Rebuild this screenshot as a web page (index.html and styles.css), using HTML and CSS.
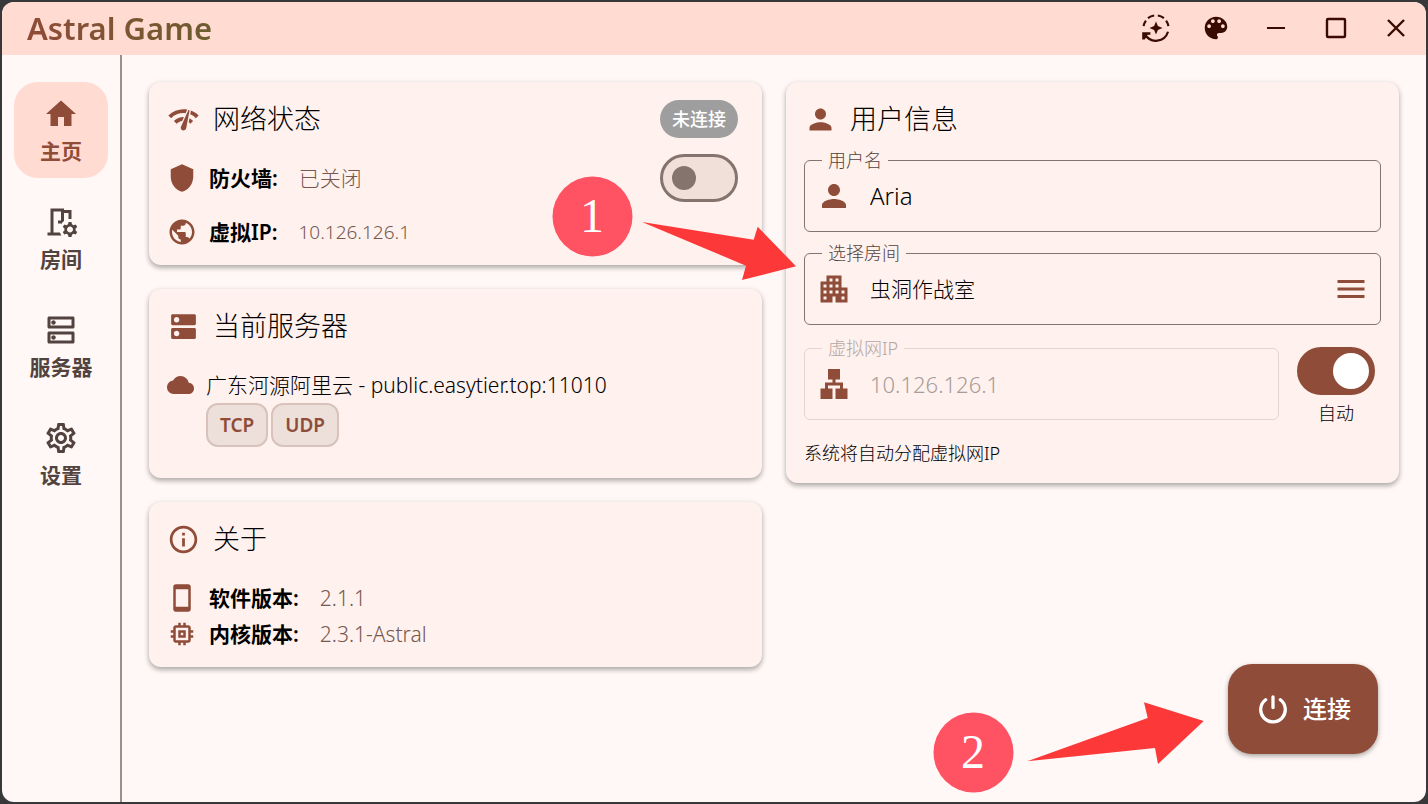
FILE: index.html
```html
<!DOCTYPE html>
<html lang="zh-CN">
<head>
<meta charset="utf-8">
<title>Astral Game</title>
<link rel="stylesheet" href="styles.css">
</head>
<body>
<div class="window">
  <header class="titlebar">
    <h1 class="app-title">Astral Game</h1>
    <div class="window-actions">
      <button class="window-btn" aria-label="检查更新"><svg class="icon-window" viewBox="0 0 30 30"><g fill="none" stroke="currentColor" stroke-width="2.2"><path d="M2.6 13.2A12.6 12.6 0 0 1 4.9 7.6M7 5.2A12.6 12.6 0 0 1 13.2 2.5M16.8 2.5A12.6 12.6 0 0 1 22.9 5.1M25.1 7.6A12.6 12.6 0 0 1 27.4 13.2"/><path d="M27 18.8A12.6 12.6 0 0 1 4 21.4"/></g><path d="M1.200 19.200H9.400V21.800H6.600L3.800 26.400H1.200zM15 8.500l1.900 4.600L21.500 15l-4.600 1.900L15 21.500l-1.900-4.600L8.500 15l4.600-1.900z"/></svg></button>
      <button class="window-btn" aria-label="主题"><svg class="icon-window" viewBox="0 0 24 24"><path d="M12 3c-4.97 0-9 4.03-9 9s4.03 9 9 9c.83 0 1.5-.67 1.5-1.5 0-.39-.15-.74-.39-1.01-.23-.26-.38-.61-.38-.99 0-.83.67-1.5 1.5-1.5H16c2.76 0 5-2.24 5-5 0-4.42-4.03-8-9-8zm-5.500 9c-.83 0-1.500-.67-1.500-1.500S5.670 9 6.500 9 8 9.670 8 10.500 7.330 12 6.500 12zm3-4C8.670 8 8 7.330 8 6.500S8.670 5 9.500 5s1.500.67 1.500 1.500S10.330 8 9.500 8zm5 0c-.83 0-1.500-.67-1.500-1.500S13.670 5 14.500 5s1.500.67 1.500 1.500S15.330 8 14.500 8zm3 4c-.83 0-1.500-.67-1.500-1.500S16.670 9 17.500 9s1.500.67 1.500 1.500-.67 1.500-1.500 1.500z"/></svg></button>
      <button class="window-btn" aria-label="最小化"><svg class="icon-window" viewBox="0 0 30 30"><path d="M6 14h18v2H6z"/></svg></button>
      <button class="window-btn" aria-label="最大化"><svg class="icon-window" viewBox="0 0 30 30"><rect x="6" y="6" width="18" height="18" rx="1" fill="none" stroke="currentColor" stroke-width="2.400"/></svg></button>
      <button class="window-btn" aria-label="关闭"><svg class="icon-window" viewBox="0 0 30 30"><path d="M7 7l16 16M23 7L7 23" fill="none" stroke="currentColor" stroke-width="2.400"/></svg></button>
    </div>
  </header>

  <div class="body">
    <nav class="sidebar">
      <a class="nav-item nav-item-active" href="#home"><svg class="icon-large" viewBox="0 0 24 24"><path d="M10 20v-6h4v6h5v-8h3L12 3 2 12h3v8z"/></svg><span>主页</span></a>
      <a class="nav-item" href="#rooms"><svg class="icon-large" viewBox="0 0 24 24"><path d="M14 11.260V6h3v4h2V4h-5V3H5v16H3v2h9.260c-.42-.6-.75-1.280-.97-2H7V5h5v8.690c.47-.98 1.160-1.820 2-2.430zM10 11h2v2h-2z"/><path fill-rule="evenodd" d="M21.690 16.370l1.140-1-1-1.730-1.450.49c-.32-.27-.68-.48-1.080-.63L19 12h-2l-.3 1.490c-.4.15-.76.36-1.080.63l-1.450-.49-1 1.730 1.140 1c-.08.5-.08.76 0 1.260l-1.140 1 1 1.730 1.450-.49c.32.27.68.48 1.080.63L17 22h2l.3-1.490c.4-.15.76-.36 1.080-.63l1.450.49 1-1.730-1.140-1c.08-.5.08-.76 0-1.270zM18 19c-1.100 0-2-.9-2-2s.9-2 2-2 2 .9 2 2-.9 2-2 2z"/></svg><span>房间</span></a>
      <a class="nav-item" href="#servers"><svg class="icon-large" viewBox="0 0 24 24"><path d="M19 15v4H5v-4h14m1-2H4c-.55 0-1 .45-1 1v6c0 .55.45 1 1 1h16c.55 0 1-.45 1-1v-6c0-.55-.45-1-1-1zM7 18.500c-.82 0-1.500-.67-1.500-1.500s.68-1.500 1.500-1.500 1.500.67 1.500 1.500-.67 1.500-1.500 1.500zM19 5v4H5V5h14m1-2H4c-.55 0-1 .45-1 1v6c0 .55.45 1 1 1h16c.55 0 1-.45 1-1V4c0-.55-.45-1-1-1zM7 8.500c-.82 0-1.500-.67-1.500-1.500S6.180 5.500 7 5.500s1.500.68 1.500 1.500S7.830 8.500 7 8.500z"/></svg><span>服务器</span></a>
      <a class="nav-item" href="#settings"><svg class="icon-large" viewBox="0 0 24 24"><path d="M19.430 12.980c.04-.32.07-.64.07-.98 0-.34-.03-.66-.07-.98l2.110-1.650c.19-.15.24-.42.12-.64l-2-3.460c-.09-.16-.26-.25-.44-.25-.06 0-.12.01-.17.03l-2.490 1c-.52-.4-1.080-.73-1.690-.98l-.38-2.650C14.460 2.180 14.250 2 14 2h-4c-.25 0-.46.18-.49.42l-.38 2.650c-.61.25-1.170.59-1.690.98l-2.490-1c-.06-.02-.12-.03-.18-.03-.17 0-.34.09-.43.25l-2 3.460c-.13.22-.07.49.12.64l2.110 1.650c-.04.32-.07.65-.07.98 0 .33.03.66.07.98l-2.110 1.650c-.19.15-.24.42-.12.64l2 3.460c.09.16.26.25.44.25.06 0 .12-.01.17-.03l2.490-1c.52.4 1.080.73 1.690.98l.38 2.650c.03.24.24.42.49.42h4c.25 0 .46-.18.49-.42l.38-2.650c.61-.25 1.170-.59 1.690-.98l2.490 1c.06.02.12.03.18.03.17 0 .34-.09.43-.25l2-3.460c.12-.22.07-.49-.12-.64l-2.110-1.650zm-1.980-1.710c.04.31.05.52.05.73 0 .21-.02.43-.05.73l-.14 1.130.89.7 1.080.84-.7 1.210-1.270-.51-1.040-.42-.9.68c-.43.32-.84.56-1.250.73l-1.060.43-.16 1.130-.2 1.350h-1.400l-.19-1.350-.16-1.130-1.060-.43c-.43-.18-.83-.41-1.230-.71l-.91-.7-1.060.43-1.270.51-.7-1.210 1.080-.84.89-.7-.14-1.130c-.03-.31-.05-.54-.05-.74s.02-.43.05-.73l.14-1.130-.89-.7-1.080-.84.7-1.210 1.270.51 1.040.42.9-.68c.43-.32.84-.56 1.250-.73l1.060-.43.16-1.130.2-1.350h1.390l.19 1.350.16 1.130 1.060.43c.43.18.83.41 1.230.71l.91.7 1.060-.43 1.270-.51.7 1.210-1.070.85-.89.7.14 1.130zM12 8c-2.210 0-4 1.790-4 4s1.790 4 4 4 4-1.790 4-4-1.790-4-4-4zm0 6c-1.100 0-2-.9-2-2s.9-2 2-2 2 .9 2 2-.9 2-2 2z"/></svg><span>设置</span></a>
    </nav>

    <main class="content">
      <div class="column">
        <section class="card">
          <div class="card-header">
            <svg class="icon-title" viewBox="0 0 24 24"><path d="M15.900 5c-.17 0-.32.09-.41.23l-.07.15-5.180 11.650c-.16.29-.26.61-.26.96 0 1.110.9 2.010 2.010 2.010.96 0 1.770-.68 1.960-1.590l.01-.03L16.400 5.500c0-.28-.22-.5-.5-.5zM1 9l2 2c2.880-2.880 6.790-4.080 10.530-3.620l1.190-2.680C9.890 3.840 4.740 5.270 1 9zm20 2l2-2c-1.640-1.640-3.550-2.820-5.590-3.570l-.53 2.820c1.500.62 2.900 1.530 4.120 2.750zm-4 4l2-2c-.8-.8-1.700-1.420-2.660-1.890l-.55 2.920c.42.27.83.59 1.210.97zM5 13l2 2c1.130-1.130 2.560-1.790 4.030-2l1.280-2.880c-2.630-.08-5.300.87-7.310 2.880z"/></svg>
            <h2 class="card-title">网络状态</h2>
            <span class="badge">未连接</span>
          </div>
          <div class="row row-switch">
            <svg class="icon-row" viewBox="0 0 24 24"><path d="M12 1L3 5v6c0 5.550 3.840 10.740 9 12 5.160-1.260 9-6.450 9-12V5l-9-4z"/></svg>
            <label class="row-label" for="firewall">防火墙:</label>
            <span class="row-value">已关闭</span>
            <input class="switch push-right" type="checkbox" id="firewall">
          </div>
          <div class="row row-ip">
            <svg class="icon-row" viewBox="0 0 24 24"><path d="M12 2C6.480 2 2 6.480 2 12s4.480 10 10 10 10-4.480 10-10S17.520 2 12 2zm-1 17.930c-3.950-.49-7-3.850-7-7.930 0-.62.08-1.210.21-1.790L9 15v1c0 1.100.9 2 2 2v1.930zm6.900-2.540c-.26-.81-1-1.390-1.900-1.390h-1v-3c0-.55-.45-1-1-1H8v-2h2c.55 0 1-.45 1-1V7h2c1.100 0 2-.9 2-2v-.41c2.930 1.190 5 4.060 5 7.410 0 2.080-.8 3.970-2.100 5.390z"/></svg>
            <span class="row-label">虚拟IP:</span>
            <span class="row-value row-value-ip">10.126.126.1</span>
          </div>
        </section>

        <section class="card card-server">
          <div class="card-header">
            <svg class="icon-title" viewBox="0 0 24 24"><path d="M20 13H4c-.55 0-1 .45-1 1v6c0 .55.45 1 1 1h16c.55 0 1-.45 1-1v-6c0-.55-.45-1-1-1zM7 19c-1.100 0-2-.9-2-2s.9-2 2-2 2 .9 2 2-.9 2-2 2zM20 3H4c-.55 0-1 .45-1 1v6c0 .55.45 1 1 1h16c.55 0 1-.45 1-1V4c0-.55-.45-1-1-1zM7 9c-1.100 0-2-.9-2-2s.9-2 2-2 2 .9 2 2-.9 2-2 2z"/></svg>
            <h2 class="card-title">当前服务器</h2>
          </div>
          <div class="server">
            <svg class="icon-cloud" viewBox="0 0 24 24"><path d="M19.350 10.040C18.670 6.590 15.640 4 12 4 9.110 4 6.600 5.640 5.350 8.040 2.340 8.360 0 10.910 0 14c0 3.310 2.690 6 6 6h13c2.760 0 5-2.240 5-5 0-2.640-2.050-4.780-4.650-4.960z"/></svg>
            <div>
              <div class="server-name">广东河源阿里云 - public.easytier.top:11010</div>
              <div class="chips"><span class="chip">TCP</span><span class="chip">UDP</span></div>
            </div>
          </div>
        </section>

        <section class="card">
          <div class="card-header">
            <svg class="icon-title" viewBox="0 0 24 24"><path d="M11 7h2v2h-2zm0 4h2v6h-2zm1-9C6.480 2 2 6.480 2 12s4.480 10 10 10 10-4.480 10-10S17.520 2 12 2zm0 18c-4.410 0-8-3.590-8-8s3.590-8 8-8 8 3.590 8 8-3.590 8-8 8z"/></svg>
            <h2 class="card-title">关于</h2>
          </div>
          <div class="versions">
            <div class="row">
              <svg class="icon-row" viewBox="0 0 24 24"><path d="M17 1.010L7 1c-1.100 0-1.990.9-1.990 2v18c0 1.100.89 2 1.990 2h10c1.100 0 2-.9 2-2V3c0-1.100-.9-1.990-2-1.990zM17 19H7V5h10v14z"/></svg>
              <span class="row-label">软件版本:</span>
              <span class="row-value">2.1.1</span>
            </div>
            <div class="row">
              <svg class="icon-row" viewBox="0 0 24 24"><path d="M15 9H9v6h6V9zm-2 4h-2v-2h2v2zm8-2V9h-2V7c0-1.100-.9-2-2-2h-2V3h-2v2h-2V3H9v2H7c-1.100 0-2 .9-2 2v2H3v2h2v2H3v2h2v2c0 1.100.9 2 2 2h2v2h2v-2h2v2h2v-2h2c1.100 0 2-.9 2-2v-2h2v-2h-2v-2h2zm-4 6H7V7h10v10z"/></svg>
              <span class="row-label">内核版本:</span>
              <span class="row-value">2.3.1-Astral</span>
            </div>
          </div>
        </section>
      </div>

      <div class="column">
        <section class="card card-user">
          <div class="card-header">
            <svg class="icon-title" viewBox="0 0 24 24"><path d="M12 12c2.210 0 4-1.790 4-4s-1.790-4-4-4-4 1.790-4 4 1.790 4 4 4zm0 2c-2.670 0-8 1.340-8 4v2h16v-2c0-2.660-5.330-4-8-4z"/></svg>
            <h2 class="card-title">用户信息</h2>
          </div>
          <div class="fields">
            <fieldset class="field">
              <legend class="field-legend"><label for="username">用户名</label></legend>
              <div class="field-body">
                <svg class="icon-large" viewBox="0 0 24 24"><path d="M12 12c2.210 0 4-1.790 4-4s-1.790-4-4-4-4 1.790-4 4 1.790 4 4 4zm0 2c-2.670 0-8 1.340-8 4v2h16v-2c0-2.660-5.330-4-8-4z"/></svg>
                <input class="field-input" id="username" type="text" value="Aria">
              </div>
            </fieldset>
            <fieldset class="field">
              <legend class="field-legend"><label for="room">选择房间</label></legend>
              <div class="field-body">
                <svg class="icon-large" viewBox="0 0 24 24"><path d="M17 11V3H7v4H3v14h8v-4h2v4h8V11h-4zM7 19H5v-2h2v2zm0-4H5v-2h2v2zm0-4H5V9h2v2zm4 4H9v-2h2v2zm0-4H9V9h2v2zm0-4H9V5h2v2zm4 8h-2v-2h2v2zm0-4h-2V9h2v2zm0-4h-2V5h2v2zm4 12h-2v-2h2v2zm0-4h-2v-2h2v2z"/></svg>
                <input class="field-input field-input-room" id="room" type="text" value="虫洞作战室" readonly>
                <button class="menu-btn" aria-label="打开房间列表"><svg class="icon-large" viewBox="0 0 24 24"><path d="M3 18h18v-2H3v2zm0-5h18v-2H3v2zm0-7v2h18V6H3z"/></svg></button>
              </div>
            </fieldset>
            <div class="ip-row">
              <fieldset class="field field-disabled">
                <legend class="field-legend"><label for="virtual-ip">虚拟网IP</label></legend>
                <div class="field-body">
                  <svg class="icon-large" viewBox="0 0 24 24"><path d="M13 22h8v-7h-3v-4h-5V9h3V2H8v7h3v2H6v4H3v7h8v-7H8v-2h8v2h-3z"/></svg>
                  <input class="field-input field-input-ip" id="virtual-ip" type="text" value="10.126.126.1" disabled>
                </div>
              </fieldset>
              <div class="auto">
                <input class="switch" type="checkbox" id="auto-ip" checked>
                <label for="auto-ip">自动</label>
              </div>
            </div>
          </div>
          <p class="hint">系统将自动分配虚拟网IP</p>
        </section>
      </div>

      <button class="connect"><svg class="icon-large" viewBox="0 0 24 24"><g fill="none" stroke="currentColor" stroke-width="2.200" stroke-linecap="round"><path d="M12 4v7"/><path d="M7.100 5.800a8.200 8.200 0 1 0 9.800 0"/></g></svg><span>连接</span></button>
    </main>
  </div>
</div>

<svg class="annotations">
  <circle class="mark" cx="592.500" cy="216.500" r="40"/>
  <text class="mark-text" x="592" y="232">1</text>
  <path class="arrow" d="M642 222L753.700 239.700 757.700 226.700 796 266.300 742 280 746 265.700z"/>
  <circle class="mark" cx="973.500" cy="752.500" r="40"/>
  <text class="mark-text" x="973" y="768">2</text>
  <path class="arrow" d="M1027.300 761.300L1147.700 718 1144 702.300 1203.700 721 1158 764 1155 748z"/>
</svg>
</body>
</html>
```

FILE: styles.css
```css
:root {
  --primary: #8f4c38;
  --surface: #fff8f6;
  --card: #fff1ed;
  --tint: #ffdbd1;
  --outline: #85736e;
  --muted: #53433f;
}

* {
  box-sizing: border-box;
}

body {
  margin: 0;
  padding: 2px;
  height: 100vh;
  background: #38383a;
  color: #000;
  font-family: "Noto Sans", "Noto Sans CJK SC", sans-serif;
  font-size: 21px;
  font-weight: 300;
  line-height: 30px;
}

button,
input {
  padding: 0;
  border: 0;
  background: none;
  color: inherit;
  font: inherit;
}

h1,
h2,
p {
  margin: 0;
}

svg {
  display: block;
  flex: none;
  fill: currentColor;
}

.window {
  display: flex;
  flex-direction: column;
  height: 100%;
  overflow: hidden;
  border-radius: 12px;
  background: var(--surface);
}

.titlebar {
  display: flex;
  align-items: flex-start;
  justify-content: space-between;
  height: 53px;
  padding-left: 25px;
  background: var(--tint);
}

.app-title {
  background: linear-gradient(90deg, #8f4c38, #6c5d2f);
  background-clip: text;
  color: transparent;
  font-size: 31px;
  font-weight: 600;
  line-height: 52px;
}

.window-actions {
  display: flex;
  color: #3a0b01;
}

.window-btn {
  display: grid;
  place-items: center;
  width: 60px;
  height: 52px;
}

.icon-window,
.icon-row {
  width: 30px;
  height: 30px;
}

.icon-title {
  width: 33px;
  height: 33px;
}

.icon-large {
  width: 36px;
  height: 36px;
}

.icon-cloud {
  width: 27px;
  height: 30px;
}

.body {
  display: flex;
  flex: 1;
  min-height: 0;
}

.sidebar {
  display: flex;
  flex-direction: column;
  gap: 12px;
  width: 120px;
  padding: 27px 12px;
  border-right: 2px solid #9d8f8a;
}

.nav-item {
  display: flex;
  flex-direction: column;
  align-items: center;
  justify-content: center;
  gap: 4px;
  height: 96px;
  padding-top: 2px;
  border-radius: 24px;
  color: var(--muted);
  font-weight: 700;
  text-decoration: none;
}

.nav-item-active {
  background: var(--tint);
  color: var(--primary);
}

.content {
  position: relative;
  display: grid;
  flex: 1;
  grid-template-columns: 1fr 1fr;
  align-items: start;
  gap: 24px;
  padding: 27px;
}

.column {
  display: flex;
  flex-direction: column;
  gap: 24px;
  min-width: 0;
}

.card {
  padding: 18px;
  border-radius: 12px;
  background: var(--card);
  box-shadow: 0 3px 5px rgb(0 0 0 / 26%), 0 1px 6px rgb(0 0 0 / 10%);
}

.card svg {
  color: var(--primary);
}

.card-header {
  display: flex;
  align-items: center;
  gap: 13px;
  height: 38px;
  padding-right: 6px;
}

.card-title {
  font-size: 27px;
  font-weight: 300;
  line-height: 38px;
}

.badge {
  margin-left: auto;
  padding: 4px 12px;
  border-radius: 19px;
  background: #9e9e9e;
  color: #fff;
  font-size: 18px;
  font-weight: 500;
}

.row {
  display: flex;
  align-items: center;
  gap: 12px;
}

.row-label {
  font-weight: 600;
}

.row-value {
  padding-left: 9px;
  color: #77574e;
}

.row-value-ip {
  font-size: 19px;
}

.row-switch {
  padding: 16px 6px 15px 0;
}

.switch {
  position: relative;
  flex: none;
  width: 78px;
  height: 48px;
  margin: 0;
  border: 3px solid var(--outline);
  border-radius: 24px;
  appearance: none;
  background: #f1dfd9;
}

.switch.push-right {
  margin-left: auto;
}

.switch::before {
  content: "";
  position: absolute;
  top: 9px;
  left: 9px;
  width: 24px;
  height: 24px;
  border-radius: 50%;
  background: var(--outline);
}

.switch:checked {
  border-color: var(--primary);
  background: var(--primary);
}

.switch:checked::before {
  top: 3px;
  left: 33px;
  width: 36px;
  height: 36px;
  background: #fff;
}

.card-server {
  padding-bottom: 31px;
}

.server {
  display: flex;
  gap: 12px;
  padding-top: 25px;
}

.chips {
  display: flex;
  gap: 3px;
  padding-top: 3px;
}

.chip {
  padding: 5px 12px;
  border: 2px solid #d8c2bc;
  border-radius: 12px;
  background: #eddfda;
  color: var(--primary);
  font-size: 19px;
  font-weight: 600;
}

.versions {
  display: flex;
  flex-direction: column;
  gap: 6px;
  padding-top: 25px;
}

.fields {
  display: flex;
  flex-direction: column;
  gap: 12px;
  padding-top: 13px;
}

.field {
  flex: 1;
  min-width: 0;
  margin: 0;
  padding: 0 11px 8px;
  border: 1px solid var(--outline);
  border-radius: 6px;
}

.field-legend {
  margin-left: 6px;
  padding: 0 6px;
  color: var(--muted);
  font-size: 18px;
  line-height: 18px;
}

.field-legend label {
  display: block;
}

.field-body {
  display: flex;
  align-items: center;
  gap: 18px;
  height: 54px;
}

.field-input {
  flex: 1;
  min-width: 0;
  font-size: 24px;
  outline: 0;
}

.field-input-room {
  font-size: 21px;
}

.field-input-ip {
  font-size: 22px;
}

.field-disabled {
  border-color: #e3d6d2;
  color: #a69c99;
}

.field-disabled .field-legend {
  color: #b3a8a5;
}

.ip-row {
  display: flex;
  align-items: flex-start;
  gap: 18px;
  padding-top: 2px;
}

.auto {
  display: flex;
  flex-direction: column;
  align-items: center;
  gap: 7px;
  padding: 8px 6px 0 0;
  font-size: 18px;
  line-height: 22px;
}

.hint {
  padding-top: 17px;
  font-size: 18px;
  line-height: 24px;
}

.connect {
  position: absolute;
  right: 48px;
  bottom: 48px;
  display: flex;
  align-items: center;
  justify-content: center;
  gap: 12px;
  width: 150px;
  height: 90px;
  border-radius: 24px;
  background: var(--primary);
  box-shadow: 0 2px 5px rgb(0 0 0 / 35%);
  color: #fff;
  font-size: 24px;
  font-weight: 500;
}

.annotations {
  position: absolute;
  top: 0;
  left: 0;
  width: 100%;
  height: 100%;
  pointer-events: none;
}

.mark {
  fill: #ff5263;
}

.mark-text {
  fill: #fff;
  font-family: "Liberation Serif", serif;
  font-size: 48px;
  text-anchor: middle;
}

.arrow {
  fill: #fc3838;
}
```
